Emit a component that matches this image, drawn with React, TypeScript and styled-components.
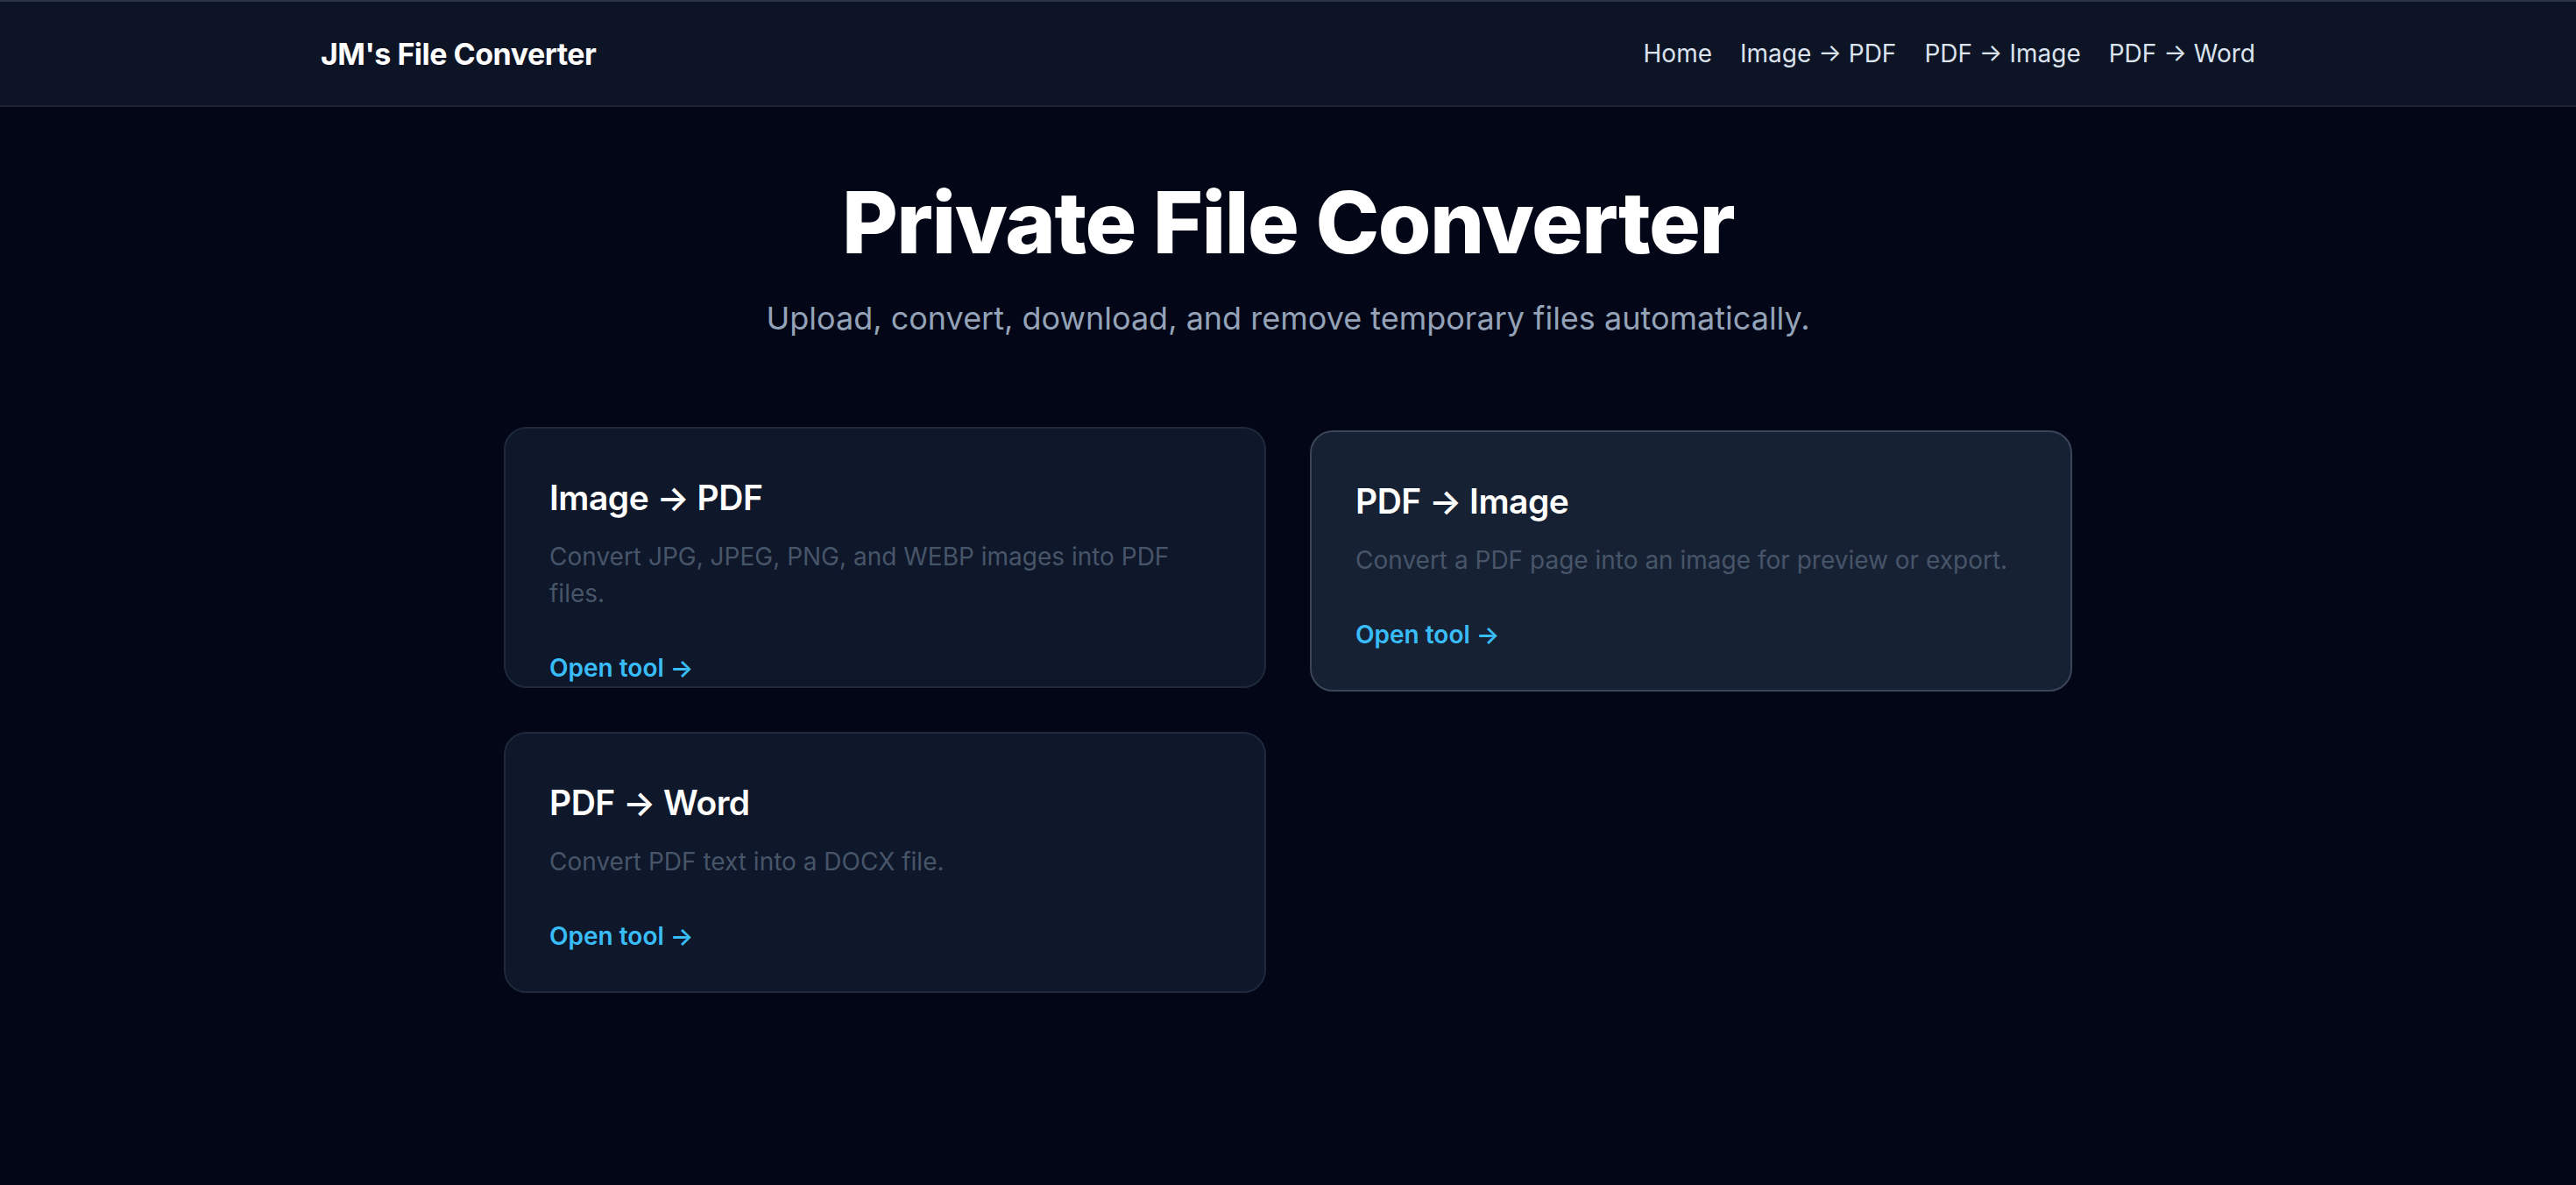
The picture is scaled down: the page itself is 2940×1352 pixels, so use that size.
import React from "react";
import styled, { createGlobalStyle } from "styled-components";

const Global = createGlobalStyle`
  html, body { margin: 0; background: #020617; }
  body { font-family: Inter, "Noto Sans", sans-serif; color: #fff; min-height: 1352px; }
  * { box-sizing: border-box; }
`;

const Header = styled.header`
  height: 122px;
  background: #0d1426;
  border-top: 2px solid #2a3343;
  border-bottom: 2px solid #1a2234;
`;
const HeaderInner = styled.div`
  max-width: 2208px;
  height: 100%;
  margin: 0 auto;
  display: flex;
  align-items: center;
  justify-content: space-between;
`;
const Logo = styled.div`
  font-size: 34px;
  font-weight: 700;
  letter-spacing: -0.5px;
`;
const Nav = styled.nav`
  display: flex;
  gap: 32px;
`;
const NavLink = styled.a`
  font-size: 28px;
  color: #dbe3ee;
  text-decoration: none;
`;
const Main = styled.main`
  display: flex;
  flex-direction: column;
  align-items: center;
  padding-top: 78px;
`;
const Title = styled.h1`
  margin: 0;
  font-size: 98px;
  font-weight: 800;
  line-height: 1.1;
  letter-spacing: -1.5px;
`;
const Subtitle = styled.p`
  margin: 28px 0 0;
  font-size: 36px;
  line-height: 54px;
  color: #94a3b8;
`;
const Grid = styled.div`
  margin-top: 97px;
  display: grid;
  grid-template-columns: 870px 870px;
  gap: 50px;
  align-items: start;
`;
const Card = styled.div<{ $hover?: boolean }>`
  height: 298px;
  padding: 50px;
  border-radius: 26px;
  background: ${(p) => (p.$hover ? "#172134" : "#0f172a")};
  border: 2px solid ${(p) => (p.$hover ? "#3a4658" : "#1e293b")};
  transform: ${(p) => (p.$hover ? "translateY(4px)" : "none")};
`;
const CardTitle = styled.h2`
  margin: 0;
  font-size: 39px;
  line-height: 58px;
  font-weight: 600;
  letter-spacing: -0.5px;
`;
const CardDesc = styled.p`
  margin: 17px 0 0;
  font-size: 28px;
  line-height: 42px;
  color: #475569;
`;
const CardLink = styled.a`
  display: block;
  margin-top: 43px;
  font-size: 28px;
  line-height: 42px;
  font-weight: 600;
  color: #38bdf8;
  text-decoration: none;
`;

const tools = [
  { t: "Image → PDF", d: "Convert JPG, JPEG, PNG, and WEBP images into PDF files." },
  { t: "PDF → Image", d: "Convert a PDF page into an image for preview or export.", hover: true },
  { t: "PDF → Word", d: "Convert PDF text into a DOCX file." },
];

export default function App() {
  return (
    <>
      <Global />
      <Header>
        <HeaderInner>
          <Logo>JM's File Converter</Logo>
          <Nav>
            <NavLink>Home</NavLink>
            <NavLink>Image → PDF</NavLink>
            <NavLink>PDF → Image</NavLink>
            <NavLink>PDF → Word</NavLink>
          </Nav>
        </HeaderInner>
      </Header>
      <Main>
        <Title>Private File Converter</Title>
        <Subtitle>Upload, convert, download, and remove temporary files automatically.</Subtitle>
        <Grid>
          {tools.map((x) => (
            <Card key={x.t} $hover={x.hover}>
              <CardTitle>{x.t}</CardTitle>
              <CardDesc>{x.d}</CardDesc>
              <CardLink>Open tool →</CardLink>
            </Card>
          ))}
        </Grid>
      </Main>
    </>
  );
}
